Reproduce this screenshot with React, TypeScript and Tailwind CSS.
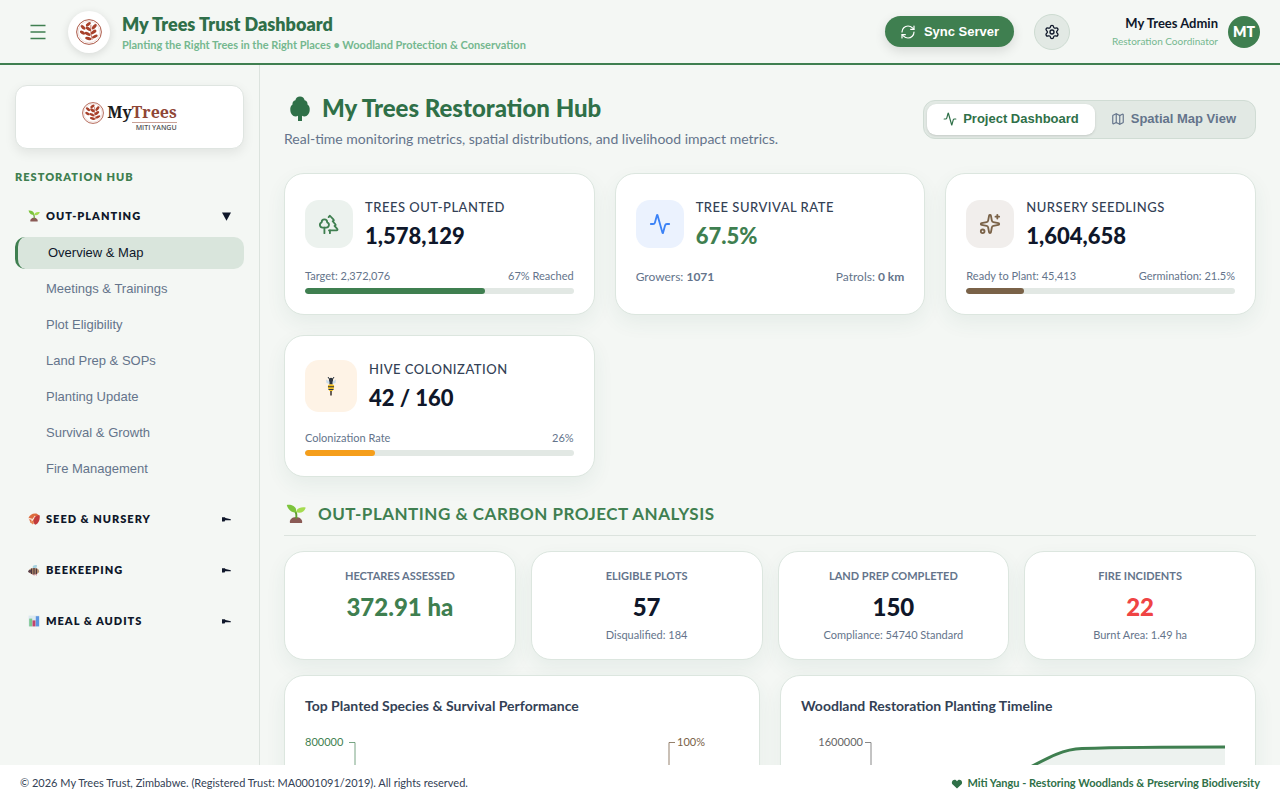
import React, { useState } from 'react';
import { Activity, Map, RefreshCw, Settings, Sparkles, Trees } from 'lucide-react';

const cardClass = 'bg-white border border-[#dce6df] rounded-[20px] shadow-[0_8px_20px_rgba(45,106,79,0.07)]';

const SproutIcon: React.FC<{ className?: string }> = ({ className }) => (
  <svg viewBox="0 0 20 20" className={className} aria-hidden="true">
    <path d="M4 19c-1-3 2-6 6-6s7 3 6 6z" fill="#8a5a55" />
    <path d="M9.2 14.500c.5-3 .3-5-1-7l2-.4c1.200 2 1.300 4.500 1 7.400z" fill="#5f9e2f" />
    <path d="M9.500 8.500C6 8.500 2 6 .8 1c4-.6 8.500.6 9.400 5z" fill="#7cc43c" />
    <path d="M10 8c1-4 5-5.500 9.600-4.600C19 8 14 10 10 8z" fill="#a5dc50" />
  </svg>
);

const BeansIcon: React.FC<{ className?: string }> = ({ className }) => (
  <svg viewBox="0 0 20 20" className={className} aria-hidden="true">
    <path d="M1 8C3 3 8 0 14 1l5 3-8 5-2 8-5-1z" fill="#dd6b3d" />
    <path d="M1 9l7 2 4-6M8 11l-3 4" fill="none" stroke="#f9e6db" strokeWidth="2" />
    <path d="M10 10c2-5 6-7 9.500-6 .8 6-1 13-7 15.500C9 18 9 14 10 10z" fill="#c23b3b" />
    <path d="M4 14l5 4" stroke="#e9864e" strokeWidth="3" />
  </svg>
);

const SideBeeIcon: React.FC<{ className?: string }> = ({ className }) => (
  <svg viewBox="0 0 20 20" className={className} aria-hidden="true">
    <path d="M8 7C7 3 10 1 15 2c0 3-1 5-3 6z" fill="#a9d3e0" />
    <ellipse cx="10" cy="12" rx="8.500" ry="5.500" fill="#b8906b" />
    <path d="M6 7.500v9M10 6.500v11M14 7.500v9" stroke="#4a3540" strokeWidth="2" />
    <circle cx="3" cy="12" r="2.500" fill="#5a4048" />
    <path d="M8 17l2 2M13 16l1 3" stroke="#b64e62" strokeWidth="1.500" />
  </svg>
);

const ChartIcon: React.FC<{ className?: string }> = ({ className }) => (
  <svg viewBox="0 0 20 20" className={className} aria-hidden="true">
    <rect x="1" y="1" width="18" height="18" fill="#dce9f0" />
    <rect x="2" y="6" width="5" height="13" fill="#7cc68e" />
    <rect x="7.500" y="9" width="5" height="10" fill="#c2446c" />
    <rect x="13" y="2" width="5.500" height="17" fill="#5c95e0" />
  </svg>
);

const HiveBeeIcon: React.FC<{ className?: string }> = ({ className }) => (
  <svg viewBox="0 0 20 20" className={className} aria-hidden="true">
    <path d="M7 1l2 3M13 1l-2 3" stroke="#2d3540" strokeWidth="1" />
    <path d="M9 6L5 3.500 5.500 7l3 1zM11 6l4-2.500-.5 3.500-3 1z" fill="#c9dcea" />
    <circle cx="10" cy="4" r="2.200" fill="#2d3540" />
    <rect x="8.500" y="5.500" width="3" height="3" fill="#2d3540" />
    <path d="M7 9c1.500-1 4.500-1 6 0 .6 3-.5 5.500-3 7-2.500-1.500-3.600-4-3-7z" fill="#f2c024" />
    <path d="M7 10.800h6M7.500 13.500h5" stroke="#2d3540" strokeWidth="1.100" />
    <path d="M10 15v4.500" stroke="#59504a" strokeWidth="1.800" />
  </svg>
);

const TreeIcon: React.FC<{ className?: string }> = ({ className }) => (
  <svg viewBox="0 0 20 25" fill="currentColor" className={className} aria-hidden="true">
    <path d="M10 .5c2.500 0 4.300 1.600 4.600 3.700 2 .5 3.200 2.200 2.900 4.200 1.700 1.200 2.400 3.200 2.200 5.400-.1 3.800-2.400 6.700-5.200 6.700-1 0-1.900-.2-2.500-.7V25H8v-5.200c-.6.500-1.500.7-2.500.7-2.800 0-5.100-2.900-5.200-6.700-.2-2.200.5-4.200 2.200-5.400-.3-2 .9-3.700 2.900-4.200C5.700 2.100 7.500.5 10 .5z" />
  </svg>
);

const Emblem: React.FC<{ className?: string }> = ({ className }) => (
  <svg viewBox="0 0 40 40" className={className} aria-hidden="true">
    <circle cx="20" cy="20" r="19" fill="none" stroke="#a8503e" strokeWidth="1.500" />
    <circle cx="20" cy="20" r="16.500" fill="none" stroke="#a8503e" strokeWidth=".6" opacity=".5" />
    <g fill="#a8412b">
      <ellipse cx="19" cy="8" rx="4.500" ry="2.300" transform="rotate(-35 19 8)" />
      <ellipse cx="11" cy="13" rx="4.500" ry="2.400" transform="rotate(40 11 13)" />
      <ellipse cx="28" cy="12" rx="5" ry="2.500" transform="rotate(-50 28 12)" />
      <ellipse cx="19" cy="15" rx="4.800" ry="2.500" transform="rotate(35 19 15)" />
      <ellipse cx="10" cy="21" rx="4.500" ry="2.300" transform="rotate(30 10 21)" />
      <ellipse cx="27" cy="20" rx="5" ry="2.500" transform="rotate(-35 27 20)" />
      <ellipse cx="18" cy="23" rx="5" ry="2.400" transform="rotate(25 18 23)" />
      <ellipse cx="29" cy="27" rx="4.800" ry="2.200" transform="rotate(-25 29 27)" />
      <ellipse cx="19" cy="30" rx="5" ry="2.200" transform="rotate(15 19 30)" />
    </g>
    <path d="M23 9c-1 8 0 15 2 23" fill="none" stroke="#a8412b" strokeWidth="1" />
  </svg>
);

interface NavGroup {
  title: string;
  icon: React.ReactNode;
  items: string[];
}

const navGroups: NavGroup[] = [
  {
    title: 'OUT-PLANTING',
    icon: <SproutIcon className="size-3" />,
    items: ['Overview & Map', 'Meetings & Trainings', 'Plot Eligibility', 'Land Prep & SOPs', 'Planting Update', 'Survival & Growth', 'Fire Management'],
  },
  { title: 'SEED & NURSERY', icon: <BeansIcon className="size-3" />, items: [] },
  { title: 'BEEKEEPING', icon: <SideBeeIcon className="size-3" />, items: [] },
  { title: 'MEAL & AUDITS', icon: <ChartIcon className="size-3" />, items: [] },
];

const Sidebar: React.FC = () => {
  const [open, setOpen] = useState('OUT-PLANTING');
  const [active, setActive] = useState('Overview & Map');

  return (
    <aside className="w-[260px] shrink-0 border-r border-[#dce3de] px-[15px] pt-5 overflow-hidden">
      <div className="h-16 flex items-center justify-center gap-[3px] bg-white border border-[#dfe5e1] rounded-xl shadow-[0_4px_12px_rgba(0,0,0,0.08)]">
        <Emblem className="size-[22px] mb-2" />
        <div className="flex flex-col items-end">
          <div className="flex font-['Noto_Serif','Liberation_Serif',serif] font-bold text-[16px] leading-5 text-[#1c1c1c]">
            <span>My</span>
            <span className="text-[#8f4636] border-b border-[#c9a196]">Trees</span>
          </div>
          <div className="mt-px font-['Open_Sans',sans-serif] font-semibold text-[7px] leading-2 text-[#555]">MITI YANGU</div>
        </div>
      </div>
      <h2 className="mt-5 text-[11px] leading-4 font-extrabold tracking-[1px] text-[#3f7f50]">RESTORATION HUB</h2>
      <nav className="mt-[13px]">
        {navGroups.map((group) => (
          <div key={group.title} className="mb-[15px]">
            <button
              onClick={() => setOpen(open === group.title ? '' : group.title)}
              className="w-full h-9 px-[13px] flex items-center justify-between text-[11px] font-extrabold tracking-[1px] text-[#0f172a]"
            >
              <span className="flex items-center gap-[6px]">
                {group.icon}
                {group.title}
              </span>
              {open === group.title ? (
                <svg viewBox="0 0 9 9" className="size-[9px]" fill="currentColor"><path d="M0 .5h9L4.500 8.800z" /></svg>
              ) : (
                <svg viewBox="0 0 9 9" className="size-[9px]" fill="currentColor"><path d="M0 2.200h2.800L3.500 3l5.300 1.200v1H3.200l-.6 1.200H0z" /></svg>
              )}
            </button>
            {open === group.title && group.items.length > 0 && (
              <div className="mt-[3px] pb-px flex flex-col gap-1">
                {group.items.map((item) => (
                  <button
                    key={item}
                    onClick={() => setActive(item)}
                    className={`h-8 rounded-[10px] text-left font-['Liberation_Sans',sans-serif] text-[13px] ${
                      active === item ? 'bg-[#d9e5dc] text-[#0f172a] border-l-[3px] border-[#3f7f50] pl-[30px]' : 'text-[#64748b] pl-[31px]'
                    }`}
                  >
                    {item}
                  </button>
                ))}
              </div>
            )}
          </div>
        ))}
      </nav>
    </aside>
  );
};

interface KpiProps {
  icon: React.ReactNode;
  iconClass: string;
  label: string;
  value: string;
  valueClass?: string;
  left: React.ReactNode;
  right: React.ReactNode;
  percent?: number;
  barClass?: string;
}

const KpiCard: React.FC<KpiProps> = ({ icon, iconClass, label, value, valueClass = 'text-[#0f172a]', left, right, percent, barClass }) => (
  <div className={`${cardClass} px-5 pt-[23px] pb-5`}>
    <div className="flex items-center gap-3">
      <div className={`flex items-center justify-center rounded-[14px] ${iconClass}`}>{icon}</div>
      <div>
        <div className="text-[13px] leading-5 tracking-[0.5px] font-medium text-[#334155]">{label}</div>
        <div className={`mt-1 text-[22px] leading-[30px] font-black ${valueClass}`}>{value}</div>
      </div>
    </div>
    <div className={`flex justify-between leading-4 text-[#64748b] ${percent === undefined ? 'mt-[18px] text-[12px]' : 'mt-[17px] text-[11px]'}`}>
      <span>{left}</span>
      <span>{right}</span>
    </div>
    {percent !== undefined && (
      <div className="mt-1 h-[6px] rounded-full overflow-hidden bg-[#e2e8e4]">
        <div className={`h-full rounded-full ${barClass}`} style={{ width: `${percent}%` }} />
      </div>
    )}
  </div>
);

const stats = [
  { label: 'HECTARES ASSESSED', value: '372.91 ha', note: '', color: 'text-[#3f7f50]' },
  { label: 'ELIGIBLE PLOTS', value: '57', note: 'Disqualified: 184', color: 'text-[#0f172a]' },
  { label: 'LAND PREP COMPLETED', value: '150', note: 'Compliance: 54740 Standard', color: 'text-[#0f172a]' },
  { label: 'FIRE INCIDENTS', value: '22', note: 'Burnt Area: 1.49 ha', color: 'text-[#ef4444]' },
];

export default function App() {
  const [view, setView] = useState('dashboard');

  return (
    <div className="h-screen flex flex-col bg-[#f4f7f4] text-[#0f172a] font-['Lato',sans-serif] overflow-hidden">
      <header className="h-[65px] shrink-0 flex items-center justify-between pl-[30px] pr-5 border-b-2 border-[#3f7f50]">
        <div className="flex items-center">
          <button aria-label="Toggle menu" className="text-[#3f7f50]">
            <svg viewBox="0 0 16 16" className="size-4" fill="none" stroke="currentColor" strokeWidth="1.500"><path d="M.5 1.500h15M.5 8h15M.5 14.500h15" /></svg>
          </button>
          <div className="ml-[22px] size-[42px] rounded-full bg-white flex items-center justify-center shadow-[0_2px_8px_rgba(0,0,0,0.12)]">
            <Emblem className="size-[26px]" />
          </div>
          <div className="ml-3 pt-[2px]">
            <h1 className="text-[18px] leading-6 font-extrabold text-[#2f6f49]">My Trees Trust Dashboard</h1>
            <p className="text-[11px] leading-[18px] font-bold text-[#74b88f]">Planting the Right Trees in the Right Places • Woodland Protection &amp; Conservation</p>
          </div>
        </div>
        <div className="flex items-center">
          <button className="h-[31px] px-[15px] flex items-center gap-2 rounded-full bg-[#3f7f50] text-white font-['Liberation_Sans',sans-serif] text-[13px] font-bold shadow-[0_4px_12px_rgba(0,0,0,0.12)]">
            <RefreshCw size={16} strokeWidth={1.800} />
            Sync Server
          </button>
          <button aria-label="Settings" className="ml-5 size-9 flex items-center justify-center rounded-full bg-[#e2e9e4] border border-[#cddbd1]">
            <Settings size={16} />
          </button>
          <div className="ml-[42px] text-right">
            <div className="text-[13px] leading-[18px] font-bold">My Trees Admin</div>
            <div className="text-[10px] leading-[18px] text-[#74b88f]">Restoration Coordinator</div>
          </div>
          <div className="ml-[10px] size-8 rounded-full bg-[#3f7f50] text-white text-[14px] font-extrabold flex items-center justify-center">MT</div>
        </div>
      </header>

      <div className="flex flex-1 min-h-0">
        <Sidebar />
        <main className="flex-1 min-w-0 overflow-hidden px-6 pt-6">
          <div className="flex items-center justify-between">
            <div>
              <h2 className="flex items-center gap-3 pl-[6px] text-[24px] leading-[38px] font-black text-[#2f7048]">
                <TreeIcon className="w-5 h-[25px]" />
                My Trees Restoration Hub
              </h2>
              <p className="mt-[2px] text-[14px] leading-5 text-[#64748b]">
                Real-time monitoring metrics, spatial distributions, and livelihood impact metrics.
              </p>
            </div>
            <div className="flex p-[3px] rounded-xl bg-[#e2e9e4] border border-[#d0dcd4] font-['Liberation_Sans',sans-serif] text-[13px] font-bold">
              <button
                onClick={() => setView('dashboard')}
                className={`h-[31px] px-4 flex items-center gap-[6px] rounded-[9px] ${view === 'dashboard' ? 'bg-white text-[#2f7048] shadow-sm' : 'text-[#64748b]'}`}
              >
                <Activity size={14} />
                Project Dashboard
              </button>
              <button
                onClick={() => setView('map')}
                className={`h-[31px] px-4 flex items-center gap-[6px] rounded-[9px] ${view === 'map' ? 'bg-white text-[#2f7048] shadow-sm' : 'text-[#64748b]'}`}
              >
                <Map size={14} />
                Spatial Map View
              </button>
            </div>
          </div>

          <section className="mt-6 grid grid-cols-3 gap-5">
            <KpiCard
              icon={<Trees size={22} />}
              iconClass="size-12 bg-[#ecf2ee] text-[#3f7f50]"
              label="TREES OUT-PLANTED"
              value="1,578,129"
              left="Target: 2,372,076"
              right="67% Reached"
              percent={67}
              barClass="bg-[#3f7f50]"
            />
            <KpiCard
              icon={<Activity size={22} />}
              iconClass="size-12 bg-[#ebf2fe] text-[#3b82f6]"
              label="TREE SURVIVAL RATE"
              value="67.5%"
              valueClass="text-[#3f7f50]"
              left={<>Growers: <strong>1071</strong></>}
              right={<>Patrols: <strong>0 km</strong></>}
            />
            <KpiCard
              icon={<Sparkles size={22} />}
              iconClass="size-12 bg-[#f1eeec] text-[#7a6248]"
              label="NURSERY SEEDLINGS"
              value="1,604,658"
              left="Ready to Plant: 45,413"
              right="Germination: 21.5%"
              percent={21.5}
              barClass="bg-[#7a6248]"
            />
            <KpiCard
              icon={<HiveBeeIcon className="size-5" />}
              iconClass="size-[52px] bg-[#fef3e6]"
              label="HIVE COLONIZATION"
              value="42 / 160"
              left="Colonization Rate"
              right="26%"
              percent={26}
              barClass="bg-[#f59e1b]"
            />
          </section>

          <h3 className="mt-5 pb-1 flex items-center gap-3 pl-[2px] border-b border-[#dce3de] text-[17px] leading-[34px] font-bold tracking-[0.5px] text-[#3f7f50]">
            <SproutIcon className="size-5" />
            OUT-PLANTING &amp; CARBON PROJECT ANALYSIS
          </h3>

          <section className="mt-[15px] grid grid-cols-4 gap-[15px]">
            {stats.map((stat) => (
              <div key={stat.label} className={`${cardClass} py-4 text-center`}>
                <div className="text-[11px] leading-4 font-bold text-[#64748b]">{stat.label}</div>
                <div className={`mt-[7px] text-[24px] leading-8 font-black ${stat.color}`}>{stat.value}</div>
                <div className="mt-1 text-[11px] leading-4 text-[#64748b]">{stat.note}</div>
              </div>
            ))}
          </section>

          <section className="mt-[15px] grid grid-cols-2 gap-5">
            <div className={`${cardClass} p-5`}>
              <h4 className="text-[14px] leading-5 font-bold text-[#334155]">Top Planted Species &amp; Survival Performance</h4>
              <svg className="mt-4 w-full h-[280px] text-[11px]">
                <text x="0" y="14" fill="#3f7f50">800000</text>
                <path d="M44 10.500h6V280" fill="none" stroke="#3f7f50" strokeOpacity=".7" />
                <path d="M370 10.500h-6V280" fill="none" stroke="#7a6248" strokeOpacity=".8" />
                <text x="372" y="14" fill="#7a6248">100%</text>
              </svg>
            </div>
            <div className={`${cardClass} p-5`}>
              <h4 className="text-[14px] leading-5 font-bold text-[#334155]">Woodland Restoration Planting Timeline</h4>
              <svg className="mt-4 w-full h-[280px] text-[11px]">
                <text x="62" y="14" textAnchor="end" fill="#666">1600000</text>
                <path d="M64 10.500h6V280" fill="none" stroke="#888" />
                <path d="M220 40C250 24 263 17 281 16.500C330 15 380 15 424 15V280H220z" fill="#edf2ef" />
                <path d="M220 40C250 24 263 17 281 16.500C330 15 380 15 424 15" fill="none" stroke="#3f7f50" strokeWidth="3" />
              </svg>
            </div>
          </section>
        </main>
      </div>

      <footer className="h-[35px] shrink-0 px-5 pt-[2px] flex items-center justify-between bg-white text-[11px] text-[#334155]">
        <span>© 2026 My Trees Trust, Zimbabwe. (Registered Trust: MA0001091/2019). All rights reserved.</span>
        <span className="flex items-center gap-1 font-bold text-[#2f7048]">
          <svg viewBox="0 0 12 11" className="w-3 h-[10px]" fill="currentColor"><path d="M6 10.500L1 5.800C-.5 4 .8.800 3.300.8 4.600.8 5.500 1.500 6 2.400 6.500 1.500 7.400.8 8.700.8c2.500 0 3.800 3.200 2.300 5z" /></svg>
          Miti Yangu - Restoring Woodlands &amp; Preserving Biodiversity
        </span>
      </footer>
    </div>
  );
}
